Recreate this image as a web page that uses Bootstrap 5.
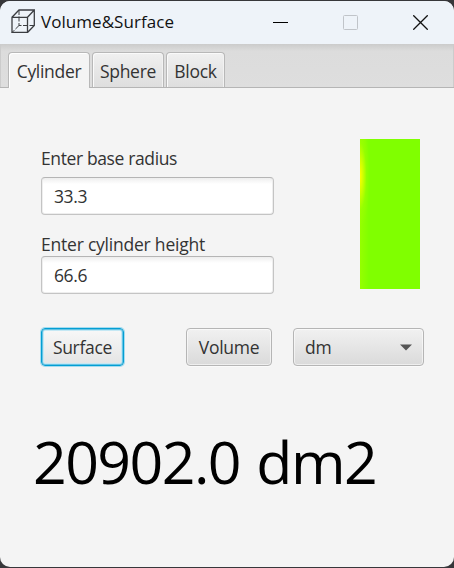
<!DOCTYPE html>
<html lang="en">
<head>
<meta charset="utf-8">
<meta name="viewport" content="width=device-width, initial-scale=1">
<title>Volume&amp;Surface</title>
<link href="https://cdn.jsdelivr.net/npm/bootstrap@5.3.0/dist/css/bootstrap.min.css" rel="stylesheet">
<style>
  body { background: #37373a; font-family: "Open Sans", "Noto Sans", sans-serif; font-size: 17.5px; line-height: 24px; color: #333; letter-spacing: -.3px; }
  .app-window { height: 566px; margin-top: 1px; background: #f4f4f4; border-radius: 10px; }
  .title-bar { height: 43px; background: #eef3f9; padding-left: 11px; color: #111; }
  .title-text { margin: -2px 0 0 6px; font-size: 17px; letter-spacing: .05px; }
  .window-controls { padding-right: 26px; gap: 55px; margin-top: -1px; }
  .tab-strip { height: 44px; padding: 8px 8px 0; gap: 2px; background: linear-gradient(#cbcbcb, #dcdcdc 7px, #dedede); border-bottom: 1px solid #b5b5b5; box-shadow: inset 1px 0 #ccc, inset -1px 0 #ccc; }
  .tab-strip .nav-link { height: 35px; padding: 6px 0 0; text-align: center; color: #333; border: 1px solid #b8b8b8; border-bottom: 0; border-radius: 4px 4px 0 0; background: linear-gradient(#f0f0f0, #dedede); box-shadow: inset 1px 1px #fafafa, inset -1px 0 #f2f2f2; margin: 0; }
  .tab-strip .nav-link.active { height: 36px; background: #f4f4f4; color: #333; border-color: #b8b8b8; box-shadow: inset 1px 1px #fff; }
  .tab-one { width: 82px; } .tab-two { width: 72px; } .tab-three { width: 59px; }
  .pane { padding: 51px 30px 0 41px; }
  .fields { width: 233px; padding-top: 7px; }
  .fields .form-label { height: 24px; }
  .fields .form-control { height: 38px; padding: 0 12px; font-size: 17.5px; letter-spacing: -.4px; color: #333; border: 1px solid #c4c4c4; border-top-color: #b5b5b5; border-radius: 4px; background: linear-gradient(#eee, #fff 6px); box-shadow: inset 1px 0 #eee, inset -1px 0 #eee, inset 0 -1px #eee; }
  .radius-label { margin-bottom: 7px; letter-spacing: -.38px; }
  .height-label { margin: 17px 0 0; letter-spacing: -.22px; }
  .solid-shape { width: 60px; height: 150px; margin-right: 4px; background: radial-gradient(ellipse 10px 52px at 0 37px, #ff0 0, rgba(230,255,0,.75) 30%, rgba(170,255,0,.3) 65%, rgba(128,255,0,0) 100%), linear-gradient(90deg, #96ff00, #80ff00 9px); }
  .actions { margin-top: 34px; }
  .fx-btn { height: 38px; padding: 0; font-size: 17.5px; letter-spacing: -.3px; line-height: 36px; color: #333; border: 1px solid #b5b5b5; border-radius: 4px; background: linear-gradient(#f1f1f1, #dadada); box-shadow: inset 0 0 0 1px rgba(255,255,255,.55), 0 1px #fafafa; }
  .fx-btn.focused { border-color: #039ed3; background: linear-gradient(#f8f8f8, #e4e4e4); box-shadow: inset 0 0 0 1px #039ed380, inset 0 0 0 2px #c5e8f4, 0 0 0 1px #a5dcef; }
  .btn-surface { width: 83px; } .btn-volume { width: 86px; margin-left: 62px; }
  .unit-box { width: 131px; margin-left: 21px; padding: 0 11px; }
  .result { margin: 55px 0 0 -8px; height: 80px; font-size: 59px; line-height: 80px; letter-spacing: -1.55px; word-spacing: 2.5px; color: #000; white-space: nowrap; }
</style>
</head>
<body class="overflow-hidden">
<main class="app-window overflow-hidden">
  <header class="title-bar d-flex align-items-center">
    <svg width="24" height="24" viewBox="0 0 24 24" fill="none" stroke="#3b3d41" stroke-width="1.3" class="mb-1"><path d="M1 8.3H16.5V23.5H1Z M1 8.3L8 1H23.3L16.5 8.3 M23.3 1V16.5L16.5 23.5"/><path d="M8 1V16.5H23.3 M8 16.5L1 23.5" stroke-width="1" stroke-dasharray="5 1.5"/></svg>
    <span class="title-text">Volume&amp;Surface</span>
    <div class="window-controls d-flex align-items-center ms-auto">
      <svg width="15" height="15" stroke="#000"><path d="M0 7.5H15"/></svg>
      <svg width="15" height="15" fill="none" stroke="#c0c4c9"><rect x=".5" y=".5" width="14" height="14" rx="1"/></svg>
      <svg width="15" height="15" stroke="#111" stroke-width="1.3"><path d="M.3.3L14.7 14.7M14.7.3L.3 14.7"/></svg>
    </div>
  </header>
  <nav class="tab-strip nav nav-tabs flex-nowrap">
    <a class="nav-link active tab-one" href="#">Cylinder</a>
    <a class="nav-link tab-two" href="#">Sphere</a>
    <a class="nav-link tab-three" href="#">Block</a>
  </nav>
  <section class="pane">
    <div class="d-flex justify-content-between">
      <form class="fields">
        <label class="form-label d-block radius-label" for="radius">Enter base radius</label>
        <input class="form-control" id="radius" value="33.3">
        <label class="form-label d-block height-label" for="height">Enter cylinder height</label>
        <input class="form-control" id="height" value="66.6">
      </form>
      <div class="solid-shape"></div>
    </div>
    <div class="actions d-flex">
      <button class="btn fx-btn focused btn-surface">Surface</button>
      <button class="btn fx-btn btn-volume">Volume</button>
      <button class="btn fx-btn unit-box d-flex justify-content-between align-items-center">dm
        <svg width="12" height="7" fill="#555"><path d="M0 .5H12L6 6.5Z"/></svg>
      </button>
    </div>
    <div class="result">20902.0 dm2</div>
  </section>
</main>
<script src="https://cdn.jsdelivr.net/npm/bootstrap@5.3.0/dist/js/bootstrap.bundle.min.js"></script>
</body>
</html>
